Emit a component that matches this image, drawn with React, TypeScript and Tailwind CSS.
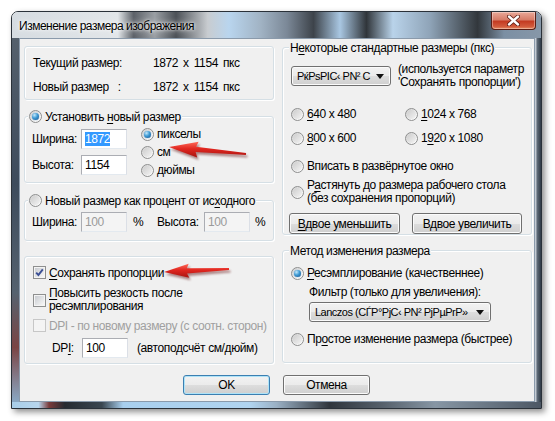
import React from "react";

function U({ children }: { children: React.ReactNode }) {
  return <span className="underline decoration-1 underline-offset-[2px]">{children}</span>;
}

function Radio({ checked = false }: { checked?: boolean }) {
  return (
    <span className="flex h-[13px] w-[13px] shrink-0 items-center justify-center rounded-full border border-[#8e8f8f] bg-[linear-gradient(135deg,#cfcfcf,#f5f5f5_70%,#ffffff)]">
      {checked ? (
        <span className="h-[7px] w-[7px] rounded-full bg-[radial-gradient(circle_at_35%_30%,#c4e8fb_0%,#3d9ad4_45%,#17508a_100%)] shadow-[0_0_1px_#2a6fae]" />
      ) : (
        <span className="h-[9px] w-[9px] rounded-full bg-[linear-gradient(135deg,#cdcdcd,#f3f3f3)]" />
      )}
    </span>
  );
}

function Check({ checked = false, disabled = false }: { checked?: boolean; disabled?: boolean }) {
  return (
    <span
      className={`relative flex h-[13px] w-[13px] shrink-0 items-center justify-center border ${
        disabled ? "border-[#c7c7c7] bg-[#f4f4f4]" : "border-[#8e8f8f] bg-[#f4f4f4]"
      }`}
    >
      {!disabled && <span className="h-[9px] w-[9px] bg-[linear-gradient(135deg,#c9ccd1,#f7f7f7)]" />}
      {checked && (
        <svg className="absolute left-0 top-0" width="11" height="11" viewBox="0 0 11 11">
          <path d="M2.2 5.6 L4.4 8 L8.8 2.4" fill="none" stroke="#3b4f95" strokeWidth="1.9" />
        </svg>
      )}
    </span>
  );
}

function Edit({
  value,
  disabled = false,
  selected = false,
}: {
  value: string;
  disabled?: boolean;
  selected?: boolean;
}) {
  return (
    <div
      className={`flex h-[20px] w-[46px] shrink-0 items-center border border-[#abadb3] border-b-[#e3e9ef] border-r-[#dbdfe6] px-[3px] ${
        disabled ? "bg-[#f4f4f4] text-[#9a9a9a]" : "bg-white text-black"
      }`}
    >
      {selected ? <span className="bg-[#3399ff] text-white">{value}</span> : value}
    </div>
  );
}

function Btn({
  children,
  className = "",
  isDefault = false,
}: {
  children: React.ReactNode;
  className?: string;
  isDefault?: boolean;
}) {
  return (
    <div
      className={`flex items-center justify-center rounded-[3px] border bg-[linear-gradient(180deg,#f2f2f2_0%,#ebebeb_50%,#dddddd_51%,#cfcfcf_100%)] ${
        isDefault
          ? "border-[#3c7fb1] shadow-[inset_0_0_0_1px_#aee3f8]"
          : "border-[#707070] shadow-[inset_0_0_0_1px_#fbfbfb]"
      } ${className}`}
    >
      {children}
    </div>
  );
}

function Combo({ text, className = "" }: { text: string; className?: string }) {
  return (
    <Btn className={`h-[20px] justify-between! pl-[5px] pr-[6px] ${className}`}>
      <span className="min-w-0 whitespace-nowrap text-[11px] tracking-[-0.5px]">{text}</span>
      <svg width="8" height="5" viewBox="0 0 8 5" className="ml-[3px] shrink-0">
        <path d="M0 0 H8 L4 5 Z" fill="#111" />
      </svg>
    </Btn>
  );
}

function Group({
  legend,
  legendLeft = "left-[6px]",
  className = "",
  children,
}: {
  legend?: React.ReactNode;
  legendLeft?: string;
  className?: string;
  children: React.ReactNode;
}) {
  return (
    <div
      className={`relative rounded-[3px] border border-[#d5dfe5] shadow-[inset_1px_1px_0_#ffffff,1px_1px_0_#ffffff] ${className}`}
    >
      {legend && (
        <div
          className={`absolute -top-[8px] ${legendLeft} flex h-[15px] items-center gap-[3px] whitespace-nowrap bg-[#f0f0f0] px-[1px]`}
        >
          {legend}
        </div>
      )}
      {children}
    </div>
  );
}

function Arrow({
  tip,
  tail,
  len,
  half,
  id,
}: {
  tip: [number, number];
  tail: [number, number];
  len: number;
  half: number;
  id: string;
}) {
  const dx = tail[0] - tip[0];
  const dy = tail[1] - tip[1];
  const l = Math.hypot(dx, dy);
  const d = [dx / l, dy / l];
  const n = [-d[1], d[0]];
  const b = [tip[0] + d[0] * len, tip[1] + d[1] * len];
  const p = (base: number[], k: number, back = 0) =>
    `${base[0] + n[0] * k + d[0] * back},${base[1] + n[1] * k + d[1] * back}`;
  const pts = [
    `${tip[0]},${tip[1]}`,
    p(b, half, 2),
    p(b, 2.6),
    p(tail, 1.1),
    p(tail, -1.1),
    p(b, -2.6),
    p(b, -half, 2),
  ].join(" ");
  return (
    <g>
      <polygon points={pts} fill="#5a0000" opacity="0.45" transform="translate(1.5 2.5)" filter="url(#blur)" />
      <polygon points={pts} fill={`url(#${id})`} />
    </g>
  );
}

export default function App() {
  return (
    <div className="relative h-[421px] w-[555px] overflow-hidden bg-white font-['Liberation_Sans',Arial,sans-serif] text-[12px] leading-[14px] tracking-[-0.4px] text-black">
      <div className="ml-[11px] mt-[11px] flex h-[398px] w-[531px] flex-col overflow-hidden rounded-t-[7px] border border-[#2a3139] shadow-[3px_3px_6px_rgba(0,0,0,0.45)]">
        {/* title bar */}
        <div className="flex h-[26px] shrink-0 items-start justify-between bg-[linear-gradient(90deg,#d6dce1_0%,#e2e6e9_20%,#5c6168_23%,#9a9fa4_27%,#4c5157_31%,#c8ccd0_37%,#b9d5ee_41%,#a1b3c4_47%,#7b8897_52%,#3d434a_57%,#a9c7e2_62%,#30353a_67%,#b9d3ea_72%,#8fa4b8_79%,#32373c_88%,#7b8fa3_93%,#8797a8_100%)]">
          <span className="pl-[7px] pt-[7px] text-[12px] leading-[14px] tracking-[-0.5px] text-black [text-shadow:0_0_6px_#ffffff,0_0_3px_#ffffff]">
            Изменение размера изображения
          </span>
          <div className="mr-[5px] flex h-[18px] w-[45px] items-center justify-center rounded-b-[4px] border border-t-0 border-[#5a1d14] bg-[linear-gradient(180deg,#e9a898_0%,#d77d69_45%,#c43b22_55%,#d25a3c_85%,#e58a60_100%)] shadow-[inset_0_0_0_1px_rgba(255,255,255,0.35)]">
            <svg width="13" height="11" viewBox="0 0 13 11">
              <path d="M2 1.5 L11 9.5 M11 1.5 L2 9.5" stroke="#5b1a10" strokeWidth="4" strokeLinecap="round" />
              <path d="M2 1.5 L11 9.5 M11 1.5 L2 9.5" stroke="#ffffff" strokeWidth="2.4" strokeLinecap="round" />
            </svg>
          </div>
        </div>

        <div className="flex">
          <div className="w-[7px] bg-[linear-gradient(180deg,#55606c_0%,#3d4b5c_40%,#55626f_70%,#7a4444_85%,#8aa8c4_100%)]" />

          {/* client area */}
          <div className="flex h-[364px] w-[516px] flex-col border border-[#8a9aab] bg-[#f0f0f0] pl-[4px] pt-[7px]">
            <div className="flex gap-[8px]">
              {/* left column */}
              <div className="flex w-[250px] flex-col">
                <Group className="flex h-[54px] flex-col gap-[10px] pl-[8px] pt-[9px]">
                  <div className="flex h-[14px] items-center">
                    <span className="w-[120px]">Текущий размер:</span>
                    <span className="flex gap-[5px]">
                      <span>1872</span>
                      <span>x</span>
                      <span>1154</span>
                      <span>пкс</span>
                    </span>
                  </div>
                  <div className="flex h-[14px] items-center">
                    <span className="w-[120px] whitespace-pre">Новый размер   :</span>
                    <span className="flex gap-[5px]">
                      <span>1872</span>
                      <span>x</span>
                      <span>1154</span>
                      <span>пкс</span>
                    </span>
                  </div>
                </Group>

                <Group
                  className="mt-[16px] flex h-[67px] pl-[7px]"
                  legendLeft="left-[3px]"
                  legend={
                    <>
                      <Radio checked />
                      <span>
                        Установить <U>н</U>овый размер
                      </span>
                    </>
                  }
                >
                  <div className="flex flex-col gap-[6px] pt-[12px]">
                    <div className="flex items-center">
                      <span className="w-[49px]">Ширина:</span>
                      <Edit value="1872" selected />
                    </div>
                    <div className="flex items-center">
                      <span className="w-[49px]">Высота:</span>
                      <Edit value="1154" />
                    </div>
                  </div>
                  <div className="ml-[14px] flex flex-col pt-[8px]">
                    <div className="flex h-[18px] items-center gap-[3px]">
                      <Radio checked />
                      <span>пикселы</span>
                    </div>
                    <div className="flex h-[18px] items-center gap-[3px]">
                      <Radio />
                      <span>см</span>
                    </div>
                    <div className="flex h-[18px] items-center gap-[3px]">
                      <Radio />
                      <span>дюймы</span>
                    </div>
                  </div>
                </Group>

                <Group
                  className="mt-[17px] h-[41px] pl-[7px] pt-[11px]"
                  legendLeft="left-[3px]"
                  legend={
                    <>
                      <Radio />
                      <span>
                        Новый размер как процент от ис<U>х</U>одного
                      </span>
                    </>
                  }
                >
                  <div className="flex h-[20px] items-center">
                    <span className="w-[49px]">Ширина:</span>
                    <Edit value="100" disabled />
                    <span className="ml-[6px] w-[24px]">%</span>
                    <span className="w-[47px]">Высота:</span>
                    <Edit value="100" disabled />
                    <span className="ml-[5px]">%</span>
                  </div>
                </Group>

                <Group className="mt-[15px] h-[108px] whitespace-nowrap pl-[8px] pt-[9px]">
                  <div className="flex h-[13px] items-center gap-[3px]">
                    <Check checked />
                    <span>
                      <U>С</U>охранять пропорции
                    </span>
                  </div>
                  <div className="mt-[8px] flex items-center gap-[3px]">
                    <Check />
                    <span className="leading-[13px]">
                      <U>П</U>овысить резкость после
                      <br />
                      ресэмплирования
                    </span>
                  </div>
                  <div className="mt-[6px] flex h-[13px] items-center gap-[3px] text-[#a0a0a0]">
                    <Check disabled />
                    <span>DPI - по новому размеру (с соотн. сторон)</span>
                  </div>
                  <div className="mt-[6px] flex h-[20px] items-center">
                    <span className="w-[49px] pl-[19px]">
                      DP<U>I</U>:
                    </span>
                    <Edit value="100" />
                    <span className="ml-[9px]">(автоподсчёт см/дюйм)</span>
                  </div>
                </Group>
              </div>

              {/* right column */}
              <div className="flex w-[250px] flex-col">
                <Group
                  className="mt-[1px] h-[188px] whitespace-nowrap pl-[8px] pt-[15px]"
                  legend={
                    <span>
                      Н<U>е</U>которые стандартные размеры (пкс)
                    </span>
                  }
                >
                  <div className="flex items-center">
                    <Combo text="PќPsPIC‹ PN² C" className="w-[100px]" />
                    <span className="ml-[7px] leading-[13px]">
                      (используется параметр
                      <br />
                      'Сохранять пропорции')
                    </span>
                  </div>
                  <div className="mt-[18px] grid grid-cols-[114px_1fr] gap-y-[10px]">
                    <div className="flex h-[14px] items-center gap-[3px]">
                      <Radio />
                      <span>
                        <U>6</U>40 x 480
                      </span>
                    </div>
                    <div className="flex h-[14px] items-center gap-[3px]">
                      <Radio />
                      <span>
                        <U>1</U>024 x 768
                      </span>
                    </div>
                    <div className="flex h-[14px] items-center gap-[3px]">
                      <Radio />
                      <span>
                        <U>8</U>00 x 600
                      </span>
                    </div>
                    <div className="flex h-[14px] items-center gap-[3px]">
                      <Radio />
                      <span>
                        1<U>9</U>20 x 1080
                      </span>
                    </div>
                  </div>
                  <div className="mt-[14px] flex h-[14px] items-center gap-[3px]">
                    <Radio />
                    <span>Вписать в развёрнутое окно</span>
                  </div>
                  <div className="mt-[6px] flex items-center gap-[3px]">
                    <Radio />
                    <span className="leading-[13px]">
                      Р<U>а</U>стянуть до размера рабочего стола
                      <br />
                      (без сохранения пропорций)
                    </span>
                  </div>
                  <div className="-ml-[2px] mt-[8px] flex gap-[12px]">
                    <Btn className="h-[21px] w-[111px]">
                      <span>
                        <U>В</U>двое уменьшить
                      </span>
                    </Btn>
                    <Btn className="h-[21px] w-[110px]">
                      <span>
                        В<U>д</U>вое увеличить
                      </span>
                    </Btn>
                  </div>
                </Group>

                <Group
                  className="mt-[15px] h-[113px] whitespace-nowrap pl-[8px] pt-[15px]"
                  legend={<span>Метод изменения размера</span>}
                >
                  <div className="flex h-[14px] items-center gap-[3px]">
                    <Radio checked />
                    <span>
                      <U>Р</U>есэмплирование (качественнее)
                    </span>
                  </div>
                  <div className="mt-[5px] flex h-[14px] items-center pl-[18px]">
                    Фильтр (только для увеличения):
                  </div>
                  <Combo text="Lanczos (CЃP°PjC‹ PN² PjPµPrP»" className="ml-[18px] mt-[3px] w-[182px]" />
                  <div className="mt-[10px] flex h-[14px] items-center gap-[3px]">
                    <Radio />
                    <span>
                      Пр<U>о</U>стое изменение размера (быстрее)
                    </span>
                  </div>
                </Group>
              </div>
            </div>

            <div className="ml-[159px] mt-[11px] flex gap-[13px]">
              <Btn isDefault className="h-[20px] w-[87px]">
                OK
              </Btn>
              <Btn className="h-[20px] w-[87px]">Отмена</Btn>
            </div>
          </div>

          <div className="flex-1 bg-[linear-gradient(90deg,#dfe6ee_0%,#5c6875_40%,#2f3a46_100%)]" />
        </div>

        <div className="h-[6px] bg-[linear-gradient(90deg,#a8cde8_0%,#b7d6ee_5%,#7a3a3a_7%,#262b31_10%,#3a4650_17%,#a8cfee_21%,#b0d4f0_45%,#9ab0c4_50%,#2f353c_60%,#56606b_70%,#8796a4_80%,#4c5764_100%)]" />
      </div>

      {/* red annotation arrows */}
      <svg className="pointer-events-none absolute left-0 top-0" width="555" height="421">
        <defs>
          <linearGradient id="red1" x1="0" y1="0" x2="0" y2="1">
            <stop offset="0" stopColor="#ff6a5a" />
            <stop offset="0.45" stopColor="#e0261f" />
            <stop offset="1" stopColor="#a81410" />
          </linearGradient>
          <filter id="blur" x="-20%" y="-50%" width="140%" height="200%">
            <feGaussianBlur stdDeviation="1.3" />
          </filter>
        </defs>
        <Arrow tip={[169, 147]} tail={[246, 154]} len={27} half={8} id="red1" />
        <Arrow tip={[164, 272]} tail={[229, 269]} len={23} half={7} id="red1" />
      </svg>
    </div>
  );
}
